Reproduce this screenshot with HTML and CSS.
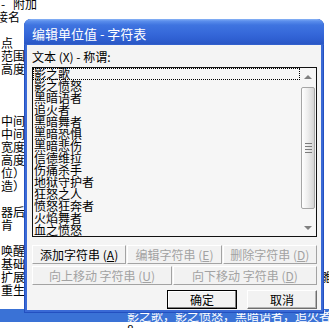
FILE: index.html
```html
<!DOCTYPE html>
<html lang="zh">
<head>
<meta charset="utf-8">
<link rel="stylesheet" href="styles.css">
</head>
<body>
<div class="screen">
  <div class="bg">
    <div class="ln"><span class="dash">-</span>附加</div>
    <div class="ln shift">接名</div>
    <div class="ln"></div>
    <div class="ln">点</div>
    <div class="ln">范围</div>
    <div class="ln">高度</div>
    <div class="ln"></div>
    <div class="ln"></div>
    <div class="ln"></div>
    <div class="ln">中间</div>
    <div class="ln">中间</div>
    <div class="ln">宽度</div>
    <div class="ln">高度</div>
    <div class="ln">位）</div>
    <div class="ln">造）</div>
    <div class="ln"></div>
    <div class="ln">器后</div>
    <div class="ln">肯</div>
    <div class="ln"></div>
    <div class="ln">唤醒</div>
    <div class="ln">基础</div>
    <div class="ln split"><span>扩展</span><span class="edge">雛</span></div>
    <div class="ln">重生</div>
    <div class="ln"></div>
    <div class="ln sel">影之歌，影之愤怒，黑暗语者，追火者，黑暗舞者</div>
    <div class="ln num">8</div>
  </div>

  <div class="dialog">
    <div class="titlebar">编辑单位值 - 字符表</div>
    <div class="client">
      <div class="label">文本 (X) - 称谓:</div>
      <div class="listbox">
        <ul class="items">
          <li class="focus">影之歌</li>
          <li>影之愤怒</li>
          <li>黑暗语者</li>
          <li>追火者</li>
          <li>黑暗舞者</li>
          <li>黑暗恐惧</li>
          <li>黑暗悲伤</li>
          <li>信德维拉</li>
          <li>伤痛杀手</li>
          <li>地狱守护者</li>
          <li>狂怒之人</li>
          <li>愤怒狂奔者</li>
          <li>火焰舞者</li>
          <li>血之愤怒</li>
        </ul>
        <div class="vscroll">
          <div class="arrow up"></div>
          <div class="track"><div class="thumb"><span class="grip"></span></div></div>
          <div class="arrow down"></div>
        </div>
      </div>
      <div class="btnrow three">
        <div class="btn">添加字符串 (<u>A</u>)</div>
        <div class="btn dis">编辑字符串 (<u>E</u>)</div>
        <div class="btn dis">删除字符串 (<u>D</u>)</div>
      </div>
      <div class="btnrow two">
        <div class="btn dis">向上移动 字符串 (<u>U</u>)</div>
        <div class="btn dis">向下移动 字符串 (<u>D</u>)</div>
      </div>
      <div class="okrow">
        <div class="btn ok">确定</div>
        <div class="btn cancel">取消</div>
      </div>
    </div>
  </div>
</div>
</body>
</html>
```

FILE: styles.css
```css
html, body {
  margin: 0;
  padding: 0;
  background: #fff;
}
body {
  width: 329px;
  height: 328px;
  overflow: hidden;
  font-family: "Noto Sans CJK SC", "Noto Sans", sans-serif;
  font-size: 12px;
  color: #000;
}
.screen {
  position: relative;
  width: 329px;
  height: 328px;
  overflow: hidden;
}
.bg {
  margin-top: -3px;
}
.ln {
  height: 13px;
  line-height: 13px;
  padding-left: 1px;
  white-space: nowrap;
  overflow: hidden;
}
.dash {
  display: inline-block;
  width: 12px;
}
.shift {
  text-indent: -5px;
}
.split {
  display: flex;
}
.edge {
  margin-left: auto;
  margin-right: -3px;
}
.sel {
  background: #3a72d6;
  color: #fff;
  padding-left: 127px;
}
.num {
  padding-left: 127px;
}

/* dialog window */
.dialog {
  position: absolute;
  left: 24px;
  top: 19px;
  width: 300px;
  height: 294px;
  box-sizing: border-box;
  border-radius: 7px 7px 0 0;
  background: #3a6ad6;
  box-shadow: inset 1px 0 #2350c0, inset -1px 0 #2350c0, inset 0 -1px #2350c0;
  padding: 0 3px 3px;
  display: flex;
  flex-direction: column;
}
.titlebar {
  margin: 0 -3px;
  height: 26px;
  box-sizing: border-box;
  border-radius: 7px 7px 0 0;
  background: linear-gradient(#8ab4f5 0, #5b8eec 2px, #3f74e0 6px, #3669da 14px, #2f60d2 20px, #2a57c4 25px, #3a6ad6 26px);
  color: #fff;
  font-size: 13px;
  line-height: 23px;
  padding: 3px 0 0 8px;
  white-space: nowrap;
}
.client {
  flex: 1;
  background: #f4f4f4;
  padding: 5px 4px 0 5px;
  display: flex;
  flex-direction: column;
}
.label {
  height: 13px;
  line-height: 13px;
  white-space: nowrap;
}
.listbox {
  margin-top: 4px;
  height: 170px;
  box-sizing: border-box;
  border: 1px solid #111;
  background: #f6f6f6;
  display: flex;
}
.items {
  flex: 1;
  margin: 0;
  padding: 0;
  list-style: none;
}
.items li {
  height: 12px;
  line-height: 12px;
  padding-left: 1px;
  margin-right: 1px;
  white-space: nowrap;
}
.items li.focus {
  outline: 1px dotted #000;
  outline-offset: -1px;
}
.vscroll {
  width: 15px;
  display: flex;
  flex-direction: column;
}
.arrow {
  height: 17px;
  display: flex;
  align-items: center;
  justify-content: center;
  padding-right: 2px;
}
.arrow::before {
  content: "";
  border-left: 4px solid transparent;
  border-right: 4px solid transparent;
}
.arrow.up::before {
  border-bottom: 4px solid #808080;
}
.arrow.down::before {
  border-top: 4px solid #808080;
}
.track {
  flex: 1;
  padding-top: 2px;
}
.thumb {
  width: 14px;
  height: 122px;
  box-sizing: border-box;
  border: 1px solid #a6a6a6;
  border-radius: 2px;
  background: linear-gradient(90deg, #ffffff, #efefef 45%, #d4d4d4);
  display: flex;
  align-items: center;
  justify-content: center;
}
.grip {
  width: 7px;
  height: 10px;
  background: repeating-linear-gradient(#7c7c7c 0 1px, transparent 1px 3px);
}

/* buttons */
.btnrow {
  display: grid;
  gap: 1px;
  height: 19px;
}
.three {
  margin-top: 8px;
  grid-template-columns: repeat(3, 1fr);
}
.two {
  margin-top: 2px;
  grid-template-columns: 140px 1fr;
}
.btn {
  box-sizing: border-box;
  border: 1px solid;
  border-color: #ffffff #a3a3a3 #a3a3a3 #ffffff;
  background: #f2f2f2;
  display: flex;
  align-items: center;
  justify-content: center;
  white-space: nowrap;
  line-height: 12px;
  color: #000;
}
.btn.dis {
  color: #a2a2a2;
}
.okrow {
  margin-top: 5px;
  display: flex;
  justify-content: flex-end;
  gap: 10px;
}
.okrow .btn {
  width: 70px;
  height: 19px;
}
.ok {
  border-color: #000;
  box-shadow: inset -1px -1px #808080, inset 1px 1px #fff;
}
.cancel {
  border-color: #ffffff #6e6e6e #6e6e6e #ffffff;
  box-shadow: inset -1px -1px #b4b4b4;
}
```
